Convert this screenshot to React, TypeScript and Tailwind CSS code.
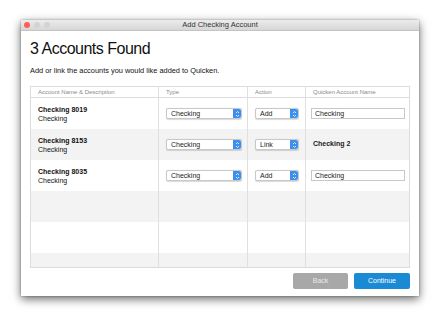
import React from "react";

const rows = [
  { name: "Checking 8019", desc: "Checking", type: "Checking", action: "Add", qname: "Checking", input: true },
  { name: "Checking 8153", desc: "Checking", type: "Checking", action: "Link", qname: "Checking 2", input: false },
  { name: "Checking 8035", desc: "Checking", type: "Checking", action: "Add", qname: "Checking", input: true },
  null,
  null,
  null,
];

const Stepper = () => (
  <div className="w-[8px] h-full bg-[#3b8ff0] rounded-r-[2px] flex items-center justify-center">
    <svg width="5" height="8" viewBox="0 0 5 8">
      <path d="M1 3 L2.5 1.5 L4 3" stroke="white" strokeWidth="0.8" fill="none" />
      <path d="M1 5 L2.5 6.5 L4 5" stroke="white" strokeWidth="0.8" fill="none" />
    </svg>
  </div>
);

const Select = ({ value, width }: { value: string; width: string }) => (
  <div className={`${width} h-[11px] flex bg-white border border-[#c8c8c8] rounded-[2px] shadow-[0_0.5px_1px_rgba(0,0,0,0.15)]`}>
    <div className="flex-1 pl-[4px] text-[7px] leading-[9px] text-[#222]">{value}</div>
    <Stepper />
  </div>
);

const App = () => {
  return (
    <div className="w-[441px] h-[316px] bg-white pt-[20px] pl-[21px]" style={{ fontFamily: '"Liberation Sans", Arial, sans-serif' }}>
      <div className="w-[398px] h-[276px] bg-white shadow-[0_3px_9px_rgba(0,0,0,0.6),0_0_2px_rgba(0,0,0,0.3)] flex flex-col">
        {/* title bar */}
        <div className="h-[11px] bg-gradient-to-b from-[#ececec] to-[#d6d6d6] border-b border-[#c4c4c4] flex items-center relative">
          <div className="flex gap-[4px] pl-[3px]">
            <div className="w-[6px] h-[6px] rounded-full bg-[#fc605c]" />
            <div className="w-[6px] h-[6px] rounded-full bg-[#d3d3d3]" />
            <div className="w-[6px] h-[6px] rounded-full bg-[#d3d3d3]" />
          </div>
          <div className="absolute inset-0 flex items-center justify-center text-[7.5px] text-[#333]">Add Checking Account</div>
        </div>

        <div className="px-[9px] flex flex-col">
          <h1 className="pt-[8px] text-[16px] leading-[20px] tracking-[-0.5px] text-[#111]">3 Accounts Found</h1>
          <p className="mt-[7px] text-[7.4px] leading-[10px] text-[#111]">Add or link the accounts you would like added to Quicken.</p>

          {/* table */}
          <div className="mt-[10px] w-[380px] h-[182px] border border-[#dcdcdc] flex flex-col overflow-hidden">
            <div className="h-[11px] flex border-b border-[#dcdcdc] text-[6px] leading-[10px] text-[#8a8a8a] shrink-0">
              <div className="w-[128px] pl-[7px] border-r border-[#e0e0e0]">Account Name &amp; Description</div>
              <div className="w-[89px] pl-[7px] border-r border-[#e0e0e0]">Type</div>
              <div className="w-[58px] pl-[7px] border-r border-[#e0e0e0]">Action</div>
              <div className="flex-1 pl-[7px]">Quicken Account Name</div>
            </div>
            {rows.map((r, i) => (
              <div key={i} className={`h-[31px] shrink-0 flex ${i % 2 === 1 ? "bg-[#f3f3f3]" : "bg-white"}`}>
                <div className="w-[128px] pl-[7px] border-r border-[#e0e0e0] flex flex-col justify-center text-[7px] leading-[9px] text-[#111]">
                  {r && (
                    <>
                      <span className="font-bold">{r.name}</span>
                      <span>{r.desc}</span>
                    </>
                  )}
                </div>
                <div className="w-[89px] pl-[7px] border-r border-[#e0e0e0] flex items-center">
                  {r && <Select value={r.type} width="w-[76px]" />}
                </div>
                <div className="w-[58px] pl-[7px] border-r border-[#e0e0e0] flex items-center">
                  {r && <Select value={r.action} width="w-[44px]" />}
                </div>
                <div className="flex-1 pl-[5px] flex items-center">
                  {r &&
                    (r.input ? (
                      <div className="w-[94px] h-[11px] border border-[#c8c8c8] bg-white pl-[3px] text-[7px] leading-[9px] text-[#222]">{r.qname}</div>
                    ) : (
                      <span className="pl-[2px] text-[7px] font-bold text-[#222]">{r.qname}</span>
                    ))}
                </div>
              </div>
            ))}
          </div>

          {/* buttons */}
          <div className="mt-[5px] flex justify-end gap-[6px]">
            <button className="w-[55px] h-[16px] bg-[#a8a8a8] rounded-[2px] text-[7px] text-[#e8e8e8]">Back</button>
            <button className="w-[56px] h-[16px] bg-[#1a8ad4] rounded-[2px] text-[7px] text-white">Continue</button>
          </div>
        </div>
      </div>
    </div>
  );
};

export default App;
